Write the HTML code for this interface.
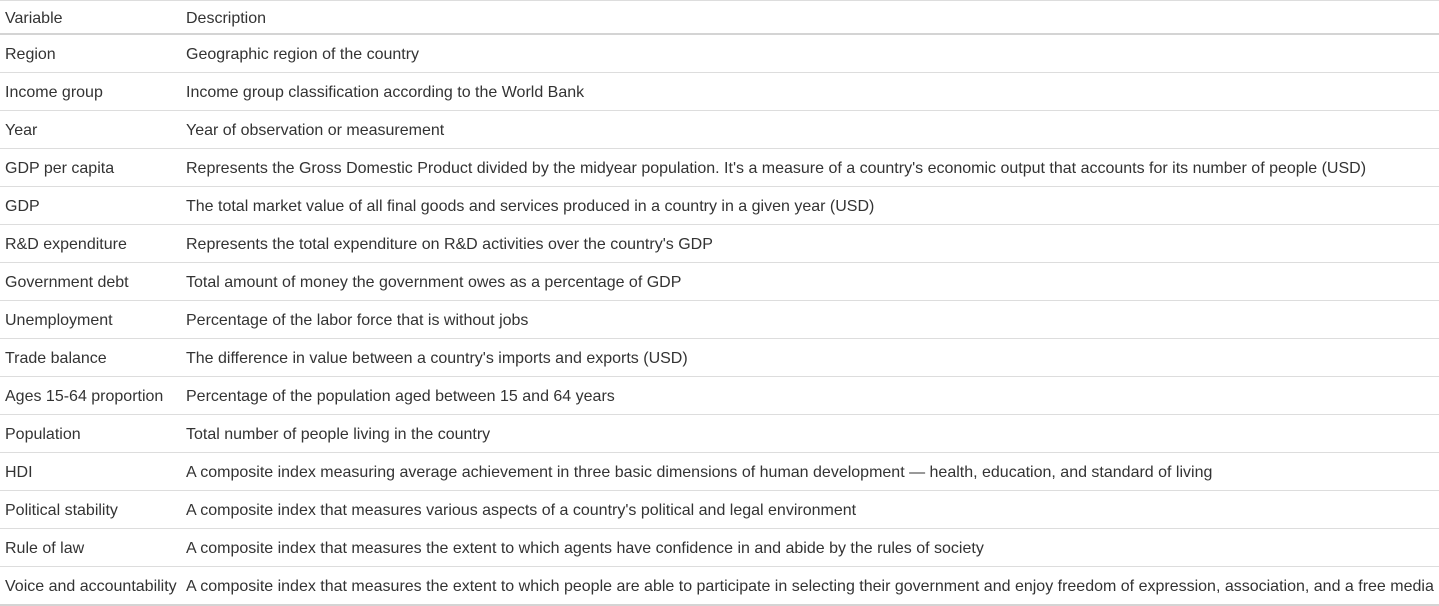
<!DOCTYPE html>
<html><head><meta charset="utf-8"><style>
html,body{margin:0;padding:0;background:#fff;width:1439px;height:606px;overflow:hidden}
table{border-collapse:collapse;font-family:"Liberation Sans",sans-serif;font-size:16px;line-height:18px;color:#333;border-top:1px solid #ddd}
td,th{padding:3px 0 0 5px;white-space:nowrap;text-align:left;font-weight:normal;height:34px;border-bottom:1px solid #ddd;box-sizing:content-box}
th{height:29px;border-bottom:2px solid #d4d4d4}
td:first-child,th:first-child{width:176px}
td:last-child,th:last-child{width:1253px;padding-left:5px}
tr:last-child td{border-bottom:2px solid #d4d4d4}
</style></head><body>
<table>
<tr><th>Variable</th><th>Description</th></tr>
<tr><td>Region</td><td>Geographic region of the country</td></tr>
<tr><td>Income group</td><td>Income group classification according to the World Bank</td></tr>
<tr><td>Year</td><td>Year of observation or measurement</td></tr>
<tr><td>GDP per capita</td><td>Represents the Gross Domestic Product divided by the midyear population. It's a measure of a country's economic output that accounts for its number of people (USD)</td></tr>
<tr><td>GDP</td><td>The total market value of all final goods and services produced in a country in a given year (USD)</td></tr>
<tr><td>R&amp;D expenditure</td><td>Represents the total expenditure on R&amp;D activities over the country's GDP</td></tr>
<tr><td>Government debt</td><td>Total amount of money the government owes as a percentage of GDP</td></tr>
<tr><td>Unemployment</td><td>Percentage of the labor force that is without jobs</td></tr>
<tr><td>Trade balance</td><td>The difference in value between a country's imports and exports (USD)</td></tr>
<tr><td>Ages 15-64 proportion</td><td>Percentage of the population aged between 15 and 64 years</td></tr>
<tr><td>Population</td><td>Total number of people living in the country</td></tr>
<tr><td>HDI</td><td>A composite index measuring average achievement in three basic dimensions of human development — health, education, and standard of living</td></tr>
<tr><td>Political stability</td><td>A composite index that measures various aspects of a country's political and legal environment</td></tr>
<tr><td>Rule of law</td><td>A composite index that measures the extent to which agents have confidence in and abide by the rules of society</td></tr>
<tr><td>Voice and accountability</td><td>A composite index that measures the extent to which people are able to participate in selecting their government and enjoy freedom of expression, association, and a free media</td></tr>
</table>
</body></html>
